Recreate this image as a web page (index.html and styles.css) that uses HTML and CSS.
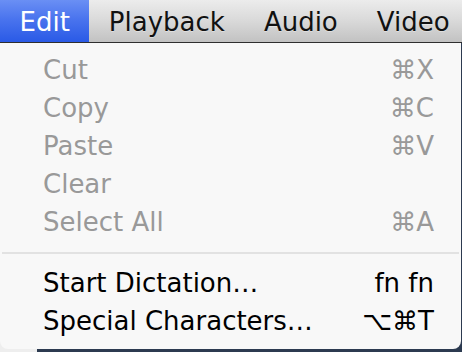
FILE: index.html
```html
<!DOCTYPE html>
<html>
<head>
<meta charset="utf-8">
<link rel="stylesheet" href="styles.css">
</head>
<body>
<div class="screen">
  <div class="menubar">
    <div class="bar-item active">Edit</div>
    <div class="bar-item">Playback</div>
    <div class="bar-item">Audio</div>
    <div class="bar-item">Video</div>
  </div>
  <div class="menu">
    <div class="row disabled"><span>Cut</span><span class="key">⌘X</span></div>
    <div class="row disabled"><span>Copy</span><span class="key">⌘C</span></div>
    <div class="row disabled"><span>Paste</span><span class="key">⌘V</span></div>
    <div class="row disabled"><span>Clear</span><span class="key"></span></div>
    <div class="row disabled"><span>Select All</span><span class="key">⌘A</span></div>
    <div class="sep"></div>
    <div class="row"><span>Start Dictation…</span><span class="key">fn fn</span></div>
    <div class="row"><span>Special Characters…</span><span class="key">⌥⌘T</span></div>
  </div>
</div>
</body>
</html>
```

FILE: styles.css
```css
html, body {
  margin: 0;
  padding: 0;
}
body {
  width: 462px;
  height: 352px;
  overflow: hidden;
  background: linear-gradient(to right, #eeeeee 37px, #2c3a50 37px);
  font-family: "DejaVu Sans", Verdana, sans-serif;
}
.screen {
  display: flex;
  flex-direction: column;
}
.menubar {
  display: flex;
  height: 42px;
  border-bottom: 1px solid #2e2e2e;
  background: linear-gradient(to bottom, #ececec 0%, #d9d9d9 50%, #c2c2c2 100%);
  font-size: 26px;
}
.bar-item {
  padding: 3px 19.5px 0;
  line-height: 39px;
  color: #111;
  text-shadow: 0 1px 0 rgba(255,255,255,0.35);
}
.bar-item.active {
  color: #fff;
  text-shadow: none;
  background: linear-gradient(to bottom, #6a8ff4 0%, #4a74ee 45%, #2a5ae6 100%);
}
.menu {
  width: 461px;
  background: #f8f8f8;
  border-radius: 0 0 8px 8px;
  padding: 8px 0 9px;
  font-size: 26px;
}
.row {
  display: flex;
  justify-content: space-between;
  height: 38px;
  line-height: 38px;
  padding: 0 27px 0 43px;
  color: #000;
  white-space: nowrap;
}
.row.disabled {
  color: #999999;
}
.sep {
  height: 2px;
  margin: 11px 2px 10px;
  background: #e2e2e2;
}
```
